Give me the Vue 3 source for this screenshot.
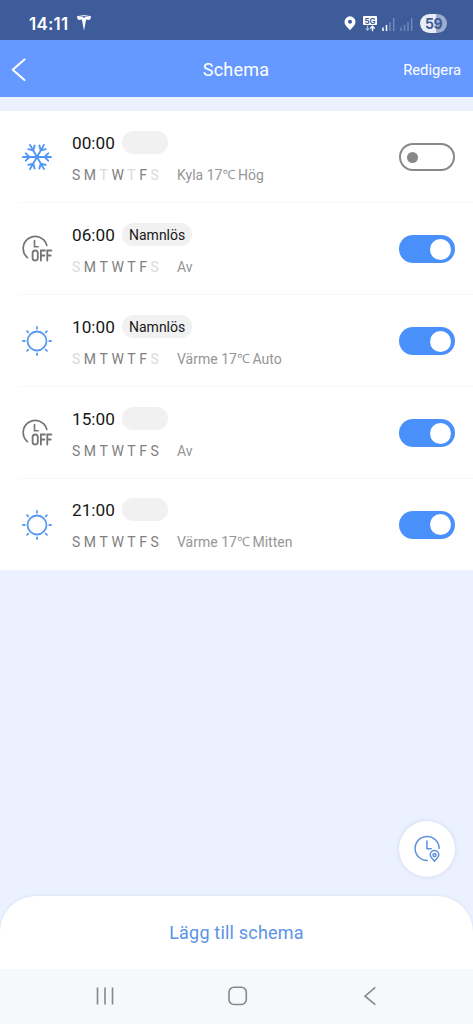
<script setup>
const letters = ['S', 'M', 'T', 'W', 'T', 'F', 'S']
const schedules = [
  { time: '00:00', name: '', days: '1101010', detail: ['Kyla 17', '℃', ' Hög'], icon: 'cool', on: false },
  { time: '06:00', name: 'Namnlös', days: '0111110', detail: ['Av', '', ''], icon: 'off', on: true },
  { time: '10:00', name: 'Namnlös', days: '0111110', detail: ['Värme 17', '℃', ' Auto'], icon: 'heat', on: true },
  { time: '15:00', name: '', days: '1111111', detail: ['Av', '', ''], icon: 'off', on: true },
  { time: '21:00', name: '', days: '1111111', detail: ['Värme 17', '℃', ' Mitten'], icon: 'heat', on: true },
]
const arms = [0, 60, 120, 180, 240, 300]
const rays = [0, 45, 90, 135, 180, 225, 270, 315]
</script>

<template>
  <div class="screen">
    <div class="status">
      <span class="clock">14:11</span>
      <svg class="tesla" width="16" height="17" viewBox="0 0 16 17">
        <path d="M1 1.7Q8-.5 15 1.7" fill="none" stroke="#fff" stroke-width="1" />
        <path d="M.8 2.500Q3.500 1.700 6.300 1.800L8 3 9.700 1.800Q12.500 1.700 15.200 2.500Q14.500 4.700 12.800 4.900Q11.500 4.300 10.100 4.400L8 15.800 5.900 4.400Q4.500 4.300 3.200 4.900Q1.500 4.700.8 2.500Z" fill="#fff" />
      </svg>
      <div class="indicators">
        <svg class="pin" width="12" height="15" viewBox="0 0 12 15">
          <path fill-rule="evenodd" d="M6 .3A5.500 5.500 0 0 0 .5 5.800C.5 9.300 3.700 11.500 6 14.300C8.300 11.500 11.500 9.300 11.500 5.800A5.500 5.500 0 0 0 6 .3ZM6 3.700A2 2 0 1 1 6 7.700A2 2 0 0 1 6 3.700Z" fill="#fff" />
        </svg>
        <svg class="net" width="14" height="16" viewBox="0 0 14 16">
          <rect width="14" height="9" rx="1" fill="#fff" />
          <text x="7" y="7.500" text-anchor="middle" class="net-text">5G</text>
          <path d="M4.500 9.500V14M2.700 12.300L4.500 14.100 6.300 12.300" fill="none" stroke="#a9b8d5" stroke-width="1.200" />
          <path d="M9.500 15.300V10.500M7.300 12.500L9.500 10.300 11.700 12.500" fill="none" stroke="#fff" stroke-width="1.400" />
        </svg>
        <svg class="signal" width="13" height="13" viewBox="0 0 13 13">
          <path d="M1 9.500V13M4.500 7V13" stroke="#fff" stroke-width="1.500" />
          <path d="M8 4V13M11.700 0V13" stroke="#748abb" stroke-width="1.500" />
        </svg>
        <svg class="signal second" width="13" height="13" viewBox="0 0 13 13">
          <path d="M1 9.500V13M4.500 7V13M8 4V13M11.700 0V13" stroke="#7288b8" stroke-width="1.500" />
        </svg>
        <span class="battery">59</span>
      </div>
    </div>

    <header class="bar">
      <svg class="back" width="16" height="24" viewBox="0 0 16 24">
        <path d="M13.500 1.500L1.700 11.700 13.500 22" fill="none" stroke="#fff" stroke-width="2" stroke-linecap="round" stroke-linejoin="round" />
      </svg>
      <span class="title">Schema</span>
      <span class="edit">Redigera</span>
    </header>

    <main class="list">
      <div v-for="item in schedules" :key="item.time" class="row">
        <svg class="icon" width="32" height="32" viewBox="-16 -16 32 32" fill="none">
          <g v-if="item.icon === 'cool'" stroke="#4f96f5" stroke-width="1.900" stroke-linecap="round">
            <path v-for="a in arms" :key="a" :transform="`rotate(${a})`" d="M0 0H14M7.600 0L11.200-3.700M7.600 0L11.200 3.700" />
          </g>
          <g v-else-if="item.icon === 'heat'" stroke="#5799f0" stroke-width="1.800" stroke-linecap="round">
            <circle r="9.500" />
            <path v-for="a in rays" :key="a" :transform="`rotate(${a})`" d="M12.300 0H14" />
          </g>
          <g v-else stroke="#747474" stroke-width="1.700" stroke-linecap="round">
            <path d="M-9.600 8.600A12 12 0 1 1 9.800-3.600" />
            <path d="M-2.500-8.500V-2.200H1.100" stroke-width="1.600" />
            <g stroke-width="1.800">
              <rect x="-4.400" y="1.500" width="5.200" height="10" rx="2.400" />
              <path d="M3.900 11.500V1.500H8M3.900 6.500H7.400M10.300 11.500V1.500H14.300M10.300 6.500H13.700" />
            </g>
          </g>
        </svg>
        <div class="info">
          <div class="top">
            <span class="time">{{ item.time }}</span>
            <span class="tag">{{ item.name }}</span>
          </div>
          <div class="bottom">
            <span class="days">
              <span v-for="(d, i) in letters" :key="i" :class="{ dim: item.days[i] === '0' }">{{ d }}</span>
            </span>
            <span class="detail">{{ item.detail[0] }}<span class="unit">{{ item.detail[1] }}</span>{{ item.detail[2] }}</span>
          </div>
        </div>
        <span class="toggle" :class="{ on: item.on }"><span class="knob"></span></span>
      </div>
    </main>

    <div class="space">
      <div class="fab">
        <svg width="28" height="28" viewBox="0 0 28 28" fill="none" stroke="#5c93dc" stroke-width="1.500" stroke-linecap="round" stroke-linejoin="round">
          <path d="M14.200 25.400A12 12 0 1 1 26.100 13.600" />
          <path d="M13.900 6V13.700H18.200" />
          <path d="M21.500 26.200C19.500 23.600 17.200 22.300 17.200 19.800A4.300 4.300 0 0 1 25.800 19.800C25.800 22.300 23.500 23.600 21.500 26.200Z" />
          <circle cx="21.500" cy="20" r="1.500" />
        </svg>
      </div>
    </div>

    <footer class="add">Lägg till schema</footer>
    <nav class="nav">
      <svg width="20" height="20" viewBox="0 0 20 20"><path d="M2.500 1.500V18.500M10 1.500V18.500M17.500 1.500V18.500" stroke="#858789" stroke-width="1.600" /></svg>
      <svg width="20" height="20" viewBox="0 0 20 20"><rect x="1" y="1.200" width="17.300" height="17.300" rx="5" fill="none" stroke="#858789" stroke-width="1.600" /></svg>
      <svg width="20" height="20" viewBox="0 0 20 20"><path d="M15.300 1.300L5 10.200 15.300 18.700" fill="none" stroke="#858789" stroke-width="1.600" /></svg>
    </nav>
  </div>
</template>

<style>
body { margin: 0; }
</style>

<style scoped>
.screen {
  width: 473px;
  height: 1024px;
  display: flex;
  flex-direction: column;
  overflow: hidden;
  background: #ebf1fe;
  font-family: Roboto, "Liberation Sans", "Noto Sans CJK SC", sans-serif;
}
.screen svg { display: block; flex: none; }
.status {
  height: 40px;
  flex: none;
  display: flex;
  align-items: center;
  box-sizing: border-box;
  padding: 7px 26px 0 29px;
  background: #3d5c99;
  color: #fff;
}
.clock { width: 41px; font: 600 17px/20px Inter, sans-serif; white-space: nowrap; letter-spacing: 0.2px; }
.tesla { margin-left: 6px; }
.indicators { display: flex; align-items: center; margin-left: auto; }
.net { margin-left: 7px; }
.net-text { font: 700 8px Inter, sans-serif; fill: #3d5c99; }
.signal { margin: 1px 0 0 5px; }
.signal.second { margin-left: 5px; }
.battery {
  width: 27px;
  height: 19px;
  margin-left: 7px;
  border-radius: 10px;
  background: linear-gradient(90deg, #e9edf6 59%, #9caccc 59%);
  color: #3d5c99;
  font: 700 14px/19px Inter, sans-serif;
  letter-spacing: -0.6px;
  text-align: center;
}
.bar {
  height: 57px;
  flex: none;
  display: grid;
  grid-template-columns: 1fr auto 1fr;
  align-items: center;
  box-sizing: border-box;
  padding: 2px 12px 0 11px;
  background: #6699ff;
  color: #fff;
}
.title { font-size: 18px; letter-spacing: 0.2px; }
.edit { font-size: 14.8px; line-height: 18px; text-align: right; }
.list { margin-top: 14px; flex: none; background: #fff; }
.row {
  height: 92px;
  display: flex;
  align-items: center;
  box-sizing: border-box;
  padding: 0 18px 0 21px;
  background: linear-gradient(#f8f8f8, #f8f8f8) 18px 100% / 455px 1px no-repeat;
}
.row:last-child { height: 91px; background: none; }
.info { margin-left: 19px; flex: 1; padding-top: 1px; }
.top { display: flex; align-items: center; height: 24px; }
.time { width: 43px; font-size: 17.2px; line-height: 24px; color: #161616; white-space: nowrap; }
.tag {
  min-width: 46px;
  height: 23px;
  box-sizing: border-box;
  margin: -1px 0 0 7px;
  padding: 0 7px;
  border-radius: 12px;
  background: #f1f1f1;
  color: #181818;
  font-size: 14px;
  line-height: 24px;
}
.bottom { display: flex; margin-top: 10px; font-size: 14px; line-height: 20px; }
.days { display: flex; gap: 3.5px; width: 105px; color: #808080; }
.dim { color: #dadada; }
.detail { color: #969696; white-space: pre; }
.unit { position: relative; top: -1px; font-family: "Noto Sans", sans-serif; font-size: 13px; line-height: 1; letter-spacing: -0.8px; }
.toggle {
  width: 56px;
  height: 28px;
  flex: none;
  display: flex;
  align-items: center;
  box-sizing: border-box;
  padding-left: 6px;
  border: 2px solid #888;
  border-radius: 14px;
}
.knob { width: 11px; height: 11px; border-radius: 50%; background: #888; }
.toggle.on { justify-content: flex-end; padding: 0 4px 0 0; border: 0; background: #4a90fb; }
.on .knob { width: 21px; height: 21px; background: #fff; }
.space { flex: 1; display: flex; align-items: flex-end; justify-content: flex-end; padding: 0 18px 18.5px 0; }
.fab {
  width: 56px;
  height: 56px;
  display: flex;
  align-items: center;
  justify-content: center;
  border-radius: 50%;
  background: #fff;
  box-shadow: 0 0 4px rgba(90, 110, 150, 0.2);
}
.add {
  height: 73px;
  flex: none;
  border-radius: 36px 36px 0 0;
  background: #fff;
  box-shadow: 0 0 3px rgba(90, 110, 150, 0.16);
  color: #5b93e6;
  font-size: 18px;
  line-height: 74px;
  letter-spacing: 0.2px;
  text-align: center;
}
.nav {
  height: 55.5px;
  flex: none;
  display: flex;
  align-items: center;
  justify-content: space-between;
  box-sizing: border-box;
  padding: 0 93px 0 95px;
  background: #f7f8fa;
}
</style>
